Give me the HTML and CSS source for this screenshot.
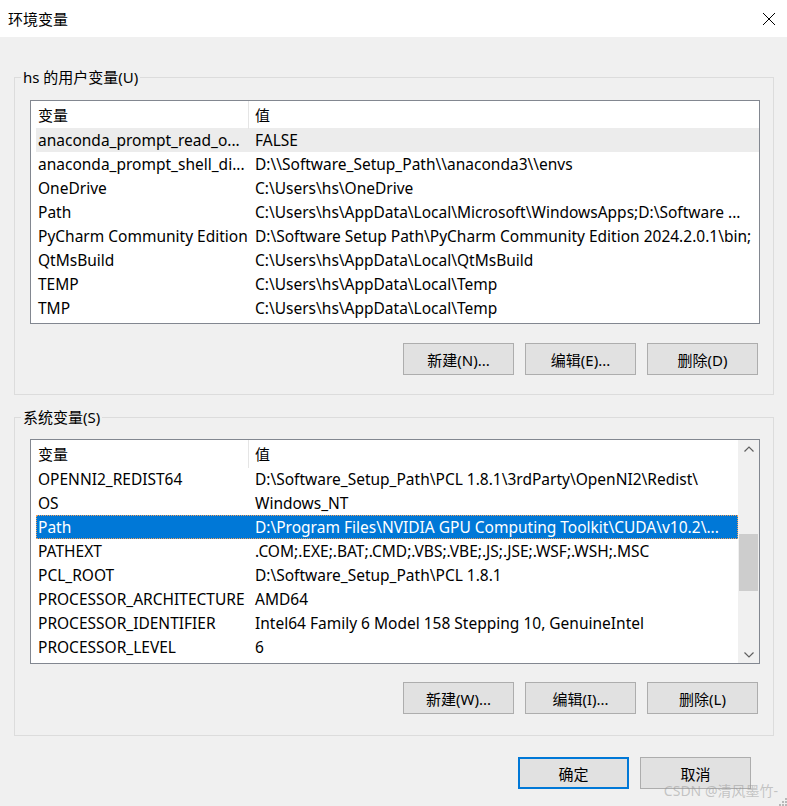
FILE: index.html
```
<!DOCTYPE html>
<html lang="zh-CN">
<head>
<meta charset="utf-8">
<title>环境变量</title>
<link rel="stylesheet" href="styles.css">
</head>
<body>
<div class="window">
  <div class="titlebar">
    <span class="title">环境变量</span>
    <span class="close"><svg width="14" height="14" viewBox="0 0 14 14"><path d="M1 1 L13 13 M13 1 L1 13" stroke="#000" stroke-width="1" fill="none"/></svg></span>
  </div>
  <div class="content">
    <fieldset class="group group1">
      <legend>hs 的用户变量(U)</legend>
      <div class="list list1">
        <div class="list-main">
          <div class="hdr"><div class="hc c1">变量</div><div class="hc c2">值</div></div>
          <div class="rows">
            <div class="row hover"><div class="c1">anaconda_prompt_read_o...</div><div class="c2">FALSE</div></div>
            <div class="row"><div class="c1">anaconda_prompt_shell_di...</div><div class="c2">D:\\Software_Setup_Path\\anaconda3\\envs</div></div>
            <div class="row"><div class="c1">OneDrive</div><div class="c2">C:\Users\hs\OneDrive</div></div>
            <div class="row"><div class="c1">Path</div><div class="c2">C:\Users\hs\AppData\Local\Microsoft\WindowsApps;D:\Software ...</div></div>
            <div class="row"><div class="c1">PyCharm Community Edition</div><div class="c2">D:\Software Setup Path\PyCharm Community Edition 2024.2.0.1\bin;</div></div>
            <div class="row"><div class="c1">QtMsBuild</div><div class="c2">C:\Users\hs\AppData\Local\QtMsBuild</div></div>
            <div class="row"><div class="c1">TEMP</div><div class="c2">C:\Users\hs\AppData\Local\Temp</div></div>
            <div class="row"><div class="c1">TMP</div><div class="c2">C:\Users\hs\AppData\Local\Temp</div></div>
          </div>
        </div>
      </div>
      <div class="btns">
        <button class="btn">新建(N)...</button>
        <button class="btn">编辑(E)...</button>
        <button class="btn">删除(D)</button>
      </div>
    </fieldset>

    <fieldset class="group group2">
      <legend>系统变量(S)</legend>
      <div class="list list2">
        <div class="list-main">
          <div class="hdr"><div class="hc c1">变量</div><div class="hc c2">值</div></div>
          <div class="rows">
            <div class="row"><div class="c1">OPENNI2_REDIST64</div><div class="c2">D:\Software_Setup_Path\PCL 1.8.1\3rdParty\OpenNI2\Redist\</div></div>
            <div class="row"><div class="c1">OS</div><div class="c2">Windows_NT</div></div>
            <div class="row selected"><div class="c1">Path</div><div class="c2">D:\Program Files\NVIDIA GPU Computing Toolkit\CUDA\v10.2\...</div></div>
            <div class="row"><div class="c1">PATHEXT</div><div class="c2">.COM;.EXE;.BAT;.CMD;.VBS;.VBE;.JS;.JSE;.WSF;.WSH;.MSC</div></div>
            <div class="row"><div class="c1">PCL_ROOT</div><div class="c2">D:\Software_Setup_Path\PCL 1.8.1</div></div>
            <div class="row"><div class="c1">PROCESSOR_ARCHITECTURE</div><div class="c2">AMD64</div></div>
            <div class="row"><div class="c1">PROCESSOR_IDENTIFIER</div><div class="c2">Intel64 Family 6 Model 158 Stepping 10, GenuineIntel</div></div>
            <div class="row"><div class="c1">PROCESSOR_LEVEL</div><div class="c2">6</div></div>
          </div>
        </div>
        <div class="scrollbar">
          <div class="arrow"><svg width="10" height="6" viewBox="0 0 10 6"><path d="M0.5 5.5 L5 1 L9.5 5.5" stroke="#606060" stroke-width="1.2" fill="none"/></svg></div>
          <div class="track"><div class="thumb"></div></div>
          <div class="arrow"><svg width="10" height="6" viewBox="0 0 10 6"><path d="M0.5 0.5 L5 5 L9.5 0.5" stroke="#606060" stroke-width="1.2" fill="none"/></svg></div>
        </div>
      </div>
      <div class="btns">
        <button class="btn">新建(W)...</button>
        <button class="btn">编辑(I)...</button>
        <button class="btn">删除(L)</button>
      </div>
    </fieldset>

    <div class="footer">
      <button class="btn primary">确定</button>
      <button class="btn">取消</button>
    </div>
  </div>
  <div class="watermark">CSDN @清风墨竹-</div>
  <div class="grip"><svg width="9" height="9" viewBox="0 0 9 9" fill="#b8b8b8"><rect x="7" y="1" width="2" height="2"/><rect x="4" y="4" width="2" height="2"/><rect x="7" y="4" width="2" height="2"/><rect x="1" y="7" width="2" height="2"/><rect x="4" y="7" width="2" height="2"/><rect x="7" y="7" width="2" height="2"/></svg></div>
</div>
</body>
</html>
```
FILE: styles.css
```
* { box-sizing: border-box; }
html, body { margin: 0; padding: 0; }
body {
  background: #f0f0f0;
  font-family: "Noto Sans", "Noto Sans CJK SC", sans-serif;
  font-size: 15px;
  color: #000;
}
.window {
  position: relative;
  width: 787px;
  height: 806px;
  overflow: hidden;
}
.titlebar {
  height: 37px;
  background: #fff;
  display: flex;
  align-items: center;
  justify-content: space-between;
  padding: 0 11px 0 8px;
}
.title { font-size: 15px; }
.close { display: flex; }
.content {
  padding: 30px 13px 0 14px;
}
.group {
  margin: 0;
  border: 1px solid #dcdcdc;
  padding: 13px 15px 19px 15px;
  min-width: 0;
}
.group legend {
  padding: 0 2px;
  margin-left: -9px;
  line-height: 20px;
  height: 20px;
}
.group2 { margin-top: 12px; padding-top: 12px; padding-bottom: 21px; }
.list {
  display: flex;
  height: 224px;
  width: 730px;
  border: 1px solid #828790;
  background: #fff;
}
.list2 { height: 225px; }
.list-main { flex: 1; min-width: 0; }
.hdr {
  display: grid;
  grid-template-columns: 218px 1fr;
  height: 27px;
}
.hc {
  line-height: 28px;
  white-space: nowrap;
}
.hdr .c1 { padding-left: 7px; border-right: 1px solid #e5e5e5; }
.hdr .c2 { padding-left: 6px; }
.rows { padding-left: 5px; }
.row {
  display: grid;
  grid-template-columns: 213px 1fr;
  height: 24px;
  line-height: 24px;
  font-size: 15.5px;
  white-space: nowrap;
}
.row > div { overflow: hidden; }
.row .c1 { padding-left: 2px; }
.row .c2 { padding-left: 6px; }
.row.hover { background: #ececec; }
.row.selected {
  background: #0078d7;
  color: #fff;
  outline: 1px dotted #f2a15d;
  outline-offset: -1px;
}
.scrollbar {
  width: 21px;
  background: #f0f0f0;
  display: flex;
  flex-direction: column;
}
.arrow {
  height: 17px;
  display: flex;
  align-items: center;
  justify-content: center;
}
.track { flex: 1; padding-top: 77px; }
.thumb { height: 57px; background: #cdcdcd; margin: 0 1px; }
.btns {
  display: flex;
  justify-content: flex-end;
  gap: 11px;
  margin-top: 19px;
}
.group2 .btns { margin-top: 18px; }
.btn {
  width: 111px;
  height: 32px;
  background: #e1e1e1;
  border: 1px solid #adadad;
  font-family: inherit;
  font-size: 15px;
  color: #000;
  padding: 0;
}
.btn.primary { border: 2px solid #0078d7; }
.footer {
  display: flex;
  justify-content: flex-end;
  gap: 11px;
  margin-top: 21px;
  padding-right: 23px;
}
.watermark {
  position: absolute;
  right: 9px;
  bottom: 6px;
  font-size: 14px;
  color: rgba(150, 150, 150, 0.5);
}
.grip {
  position: absolute;
  right: 0;
  bottom: 0;
  width: 9px;
  height: 9px;
  display: flex;
}
```
